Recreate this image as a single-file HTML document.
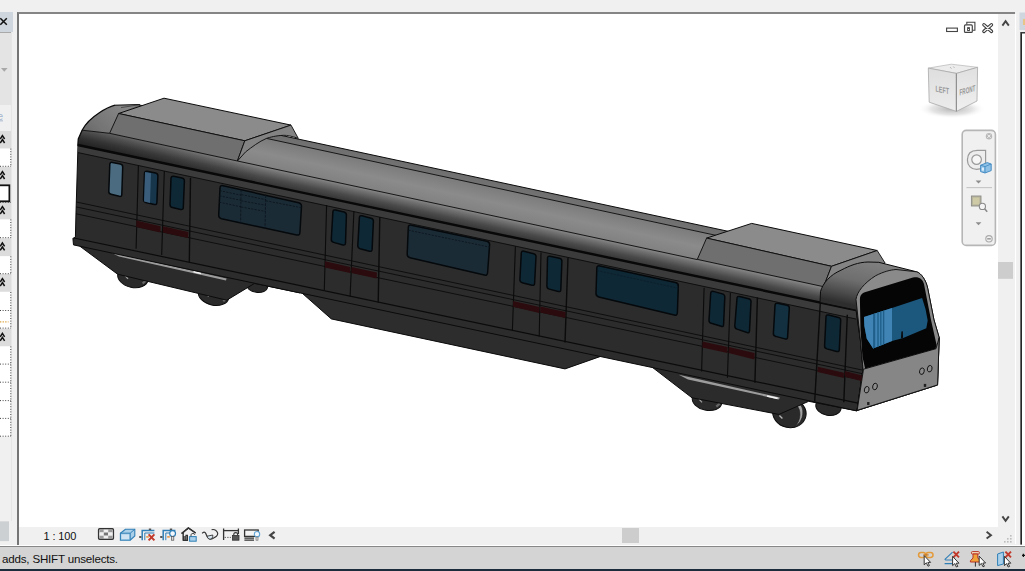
<!DOCTYPE html>
<html><head><meta charset="utf-8"><title>Revit 3D View</title>
<style>
html,body{margin:0;padding:0}
body{width:1025px;height:571px;overflow:hidden;background:#f0f0f0;position:relative;font-family:"Liberation Sans",sans-serif;color:#000}
.abs{position:absolute}
#vp{left:17px;top:12px;width:998px;height:533px;background:#f0f0f0;border-left:2px solid #757575;border-top:2px solid #858585;box-sizing:border-box}
#canvas{left:19px;top:14px;width:979px;height:513px;background:#fff}
#vscroll{left:998px;top:14px;width:16px;height:513px;background:#f0f0f0}
#hbar{left:19px;top:527px;width:996px;height:18px;background:#f0f0f0}
#status{left:0;top:545px;width:1025px;height:25px;background:#d4d4d4;box-sizing:border-box;border-top:1px solid #fff}
#status:before{content:'';position:absolute;left:0;top:0;width:1025px;height:1px;background:#878787}
#bottomline{left:0;top:569px;width:1025px;height:2px;background:#1d2c3c}
#scale{left:43.6px;top:529px;font-size:11px;line-height:14px;letter-spacing:-0.15px;color:#111;white-space:pre}
#stxt{left:2px;top:550.6px;font-size:11.6px;line-height:15px;letter-spacing:-0.2px;color:#111;white-space:pre}
#lp{left:0;top:12px;width:12px;height:533px;background:#f0f0f0}
.hdr{left:0;width:12px;background:#dadada}
.fld{left:0;width:10px;background:#fff;border:1px dotted #555;border-left:none;box-sizing:border-box}
</style></head><body>
<div class="abs" id="vp"></div>
<div class="abs" id="canvas"></div>
<div class="abs" id="vscroll"></div>
<div class="abs" id="hbar"></div>
<div class="abs" id="status"></div>
<div class="abs" id="bottomline"></div>
<div class="abs" id="scale">1 : 100</div>
<div class="abs" id="stxt">adds, SHIFT unselects.</div>
<div class="abs" id="lp"></div>
<!--CHROME_EXTRA-->
<svg class="abs" style="left:0;top:0" width="1025" height="571" viewBox="0 0 1025 571">
<g id="train" shape-rendering="geometricPrecision">
<defs>
<linearGradient id="roofg" gradientUnits="userSpaceOnUse" x1="300" y1="138.8" x2="288.7" y2="191.4">
<stop offset="0" stop-color="#6e6e6e"/><stop offset="0.115" stop-color="#727272"/>
<stop offset="0.125" stop-color="#7b7b7b"/><stop offset="0.4" stop-color="#8b8b8b"/><stop offset="0.67" stop-color="#808080"/>
<stop offset="0.70" stop-color="#747474"/><stop offset="0.84" stop-color="#4a4a4a"/><stop offset="1" stop-color="#2c2c2c"/>
</linearGradient>
<linearGradient id="capg" gradientUnits="userSpaceOnUse" x1="118" y1="104" x2="84" y2="140">
<stop offset="0" stop-color="#868686"/><stop offset="0.6" stop-color="#747474"/><stop offset="1" stop-color="#626262"/>
</linearGradient>
<linearGradient id="cabg" gradientUnits="userSpaceOnUse" x1="866" y1="262" x2="856.5" y2="306">
<stop offset="0" stop-color="#7e7e7e"/><stop offset="0.45" stop-color="#6e6e6e"/><stop offset="0.78" stop-color="#4a4a4a"/><stop offset="1" stop-color="#2e2e2e"/>
</linearGradient>
<linearGradient id="glassg" gradientUnits="userSpaceOnUse" x1="864" y1="0" x2="928" y2="0">
<stop offset="0" stop-color="#3b7fb0"/><stop offset="0.38" stop-color="#2f74a6"/><stop offset="0.42" stop-color="#1d5a82"/><stop offset="1" stop-color="#1b5880"/>
</linearGradient>
<linearGradient id="endshade" gradientUnits="userSpaceOnUse" x1="78" y1="0" x2="260" y2="0">
<stop offset="0" stop-color="#000" stop-opacity="0.34"/><stop offset="0.5" stop-color="#000" stop-opacity="0.2"/><stop offset="1" stop-color="#000" stop-opacity="0"/>
</linearGradient>
</defs>
<ellipse cx="133" cy="277" rx="15.5" ry="10.5" fill="#2a2a2a" stroke="#0c0c0c" stroke-width="1" transform="rotate(12 133 277)"/>
<path d="M125,275.5 L128,278.8" stroke="#a0a0a0" stroke-width="1.2"/>
<path d="M142.6,283.5 L146.3,280.1" stroke="#666" stroke-width="2.2"/>
<ellipse cx="213.7" cy="294.8" rx="15.5" ry="10.4" fill="#2a2a2a" stroke="#0c0c0c" stroke-width="1" transform="rotate(12 213.7 294.8)"/>
<path d="M205.7,293.3 L208.7,296.6" stroke="#a0a0a0" stroke-width="1.2"/>
<path d="M223.3,301.2 L227.0,297.9" stroke="#666" stroke-width="2.2"/>
<ellipse cx="257" cy="286" rx="10.6" ry="6.3" fill="#2a2a2a" stroke="#0c0c0c" stroke-width="1" transform="rotate(8 257 286)"/>
<ellipse cx="707" cy="400.5" rx="15" ry="9.8" fill="#2a2a2a" stroke="#0c0c0c" stroke-width="1" transform="rotate(12 707 400.5)"/>
<path d="M699,399.0 L702,402.3" stroke="#a0a0a0" stroke-width="1.2"/>
<path d="M716.3,406.6 L719.9,403.4" stroke="#666" stroke-width="2.2"/>
<ellipse cx="789.4" cy="413" rx="16.8" ry="14.6" fill="#2a2a2a" stroke="#0c0c0c" stroke-width="1" transform="rotate(12 789.4 413)"/>
<path d="M798.9,403.5 C804.9,407 804.4,421 795.4,426.2 C800.9,420 801.9,410 795.9,404.5 Z" fill="#a4a4a4" stroke="#1a1a1a" stroke-width="0.6"/>
<path d="M779.4,415.5 L782.4,418.5" stroke="#b5b5b5" stroke-width="1.3"/>
<ellipse cx="828.5" cy="406.5" rx="12.8" ry="8.8" fill="#2a2a2a" stroke="#0c0c0c" stroke-width="1" transform="rotate(10 828.5 406.5)"/>
<polygon points="80.0,246.3 117.6,274.2 226.8,300.2 254.5,283.4 300.0,292.9 300.0,284.9 80.0,240.3" fill="#2b2b2b" stroke="#0b0b0b" stroke-width="1"/>
<polygon points="109.5,251.8 119.0,256.6 226.0,280.6 226.6,278.6 121.0,254.4" fill="#9c9c9c"/>
<path d="M193.5,271.8 L201,273.5" stroke="#f2f2f2" stroke-width="1.6"/>
<polygon points="298.0,289.5 331.3,318.9 565.0,368.9 602.0,355.9 602.0,348.9 298.0,284.5" fill="#2d2d2d" stroke="#0b0b0b" stroke-width="1"/>
<polygon points="651.0,366.3 692.0,397.8 778.9,414.4 808.7,401.3 857.0,410.9 857.0,402.9 651.0,359.3" fill="#2b2b2b" stroke="#0b0b0b" stroke-width="1"/>
<polygon points="678.8,374.8 688.0,379.4 779.0,399.4 779.8,397.6 690.0,377.2" fill="#9c9c9c"/>
<path d="M767,396 L777.6,398.4" stroke="#f2f2f2" stroke-width="1.6"/>
<polygon points="78.0,145.0 856.0,310.1 860.4,340.0 863.0,369.0 857.0,410.9 73.5,244.9 72.9,238.3 75.4,237.3 76.0,212.0" fill="#2c2c2c" stroke="#0b0b0b" stroke-width="1"/>
<polygon points="78.0,145.0 856.0,310.1 856.5,319.0 78.0,152.6" fill="#3b3b3b"/>
<line x1="78" y1="152.6" x2="856" y2="319.0" stroke="#0b0b0b" stroke-width="0.9"/>
<line x1="76" y1="201.9" x2="862" y2="370.0" stroke="#0b0b0b" stroke-width="0.9"/>
<line x1="76" y1="206.9" x2="862" y2="373.6" stroke="#0b0b0b" stroke-width="0.9"/>
<line x1="76" y1="213.8" x2="862" y2="380.1" stroke="#0b0b0b" stroke-width="0.9"/>
<line x1="74" y1="238.0" x2="858" y2="403.1" stroke="#0b0b0b" stroke-width="1.2"/>
<polygon points="139.2,104.9 880.0,263.9 880.0,315.2 78.0,145.0 78.3,139.0 82.0,130.2 88.0,121.5 99.0,113.0 114.7,105.2" fill="url(#roofg)"/>
<polygon points="78.0,145.0 78.3,139.0 82.1,130.2 109.6,133.3 237.4,161.0 260.0,165.8 260.0,183.6" fill="url(#endshade)"/>
<path d="M82.1,130.2 C86,123 92,117.5 99,113 C105,109 110,106.5 115,105.2 L139.7,104.4 L118.6,113.5 L109.6,133.3 Z" fill="url(#capg)"/>
<path d="M115,105.2 L139.7,104.5" fill="none" stroke="#0b0b0b" stroke-width="1"/>
<path d="M121,107.6 L139.7,104.7" fill="none" stroke="#333" stroke-width="0.7"/>
<path d="M77.8,145.6 L78.3,139 L82.1,130.2 C86,123 92,117.5 99,113 C105,109 110,106.5 115,105.2" fill="none" stroke="#0b0b0b" stroke-width="1.3"/>
<line x1="139" y1="104.9" x2="860" y2="259.6" stroke="#0b0b0b" stroke-width="1"/>
<line x1="139" y1="110.9" x2="860" y2="266.4" stroke="#0b0b0b" stroke-width="0.9"/>
<line x1="237.4" y1="161" x2="697.3" y2="259.6" stroke="#0b0b0b" stroke-width="0.9"/>
<line x1="82.1" y1="130.2" x2="109.6" y2="133.3" stroke="#0b0b0b" stroke-width="0.9"/>
<line x1="77.8" y1="145.0" x2="856" y2="310.1" stroke="#080808" stroke-width="2.4"/>
<polygon points="118.6,113.5 164.0,98.2 291.0,125.1 244.8,140.8" fill="#8b8b8b" stroke="#0b0b0b" stroke-width="1"/>
<polygon points="118.6,113.5 244.8,140.8 237.4,161.0 109.6,133.3" fill="#6f6f6f" stroke="#0b0b0b" stroke-width="0.9"/>
<path d="M244.8,140.8 L291,125.1 L298.3,138.4 C292,136.2 287,135.2 283.6,135.3 C276,135.6 270,137.2 266.5,138.4 C259,141.5 252,147 245.6,151.9 L237.4,161 Z" fill="#838383" stroke="#0b0b0b" stroke-width="0.9"/>
<polygon points="706.6,238.1 751.7,223.4 877.2,250.5 831.5,266.3" fill="#8b8b8b" stroke="#0b0b0b" stroke-width="1"/>
<polygon points="706.6,238.1 831.5,266.3 823.6,286.7 697.3,259.4" fill="#6f6f6f" stroke="#0b0b0b" stroke-width="0.9"/>
<polygon points="831.5,266.3 877.2,250.5 885.1,263.1 823.6,286.7" fill="#838383" stroke="#0b0b0b" stroke-width="0.9"/>
<path d="M820.5,291.5 C823,283 830,275 841,270.2 C850,265.5 858,262.3 868,262 L878.8,262.3 L916.6,271.8 C921,273 926,280 927.7,288.3 L934,320 L939.2,337.6 L937.5,385 L857,410.5 L863,369 L860.4,340 L856,310.1 L820,302.5 Z" fill="url(#cabg)" stroke="#0b0b0b" stroke-width="1"/>
<path d="M856,299.4 C857,292 864,283 875.7,275.7 C884,271.5 890,270 896,269.5 L916.6,271.8 C921,273 926,280 927.7,288.3 L934,320 L939.2,337.6 L937.5,385 L857,410.5 L863,369 L860.4,340 Z" fill="#8a8a8a" stroke="#0b0b0b" stroke-width="0.9"/>
<polygon points="863.5,369.2 936.0,348.7 939.2,337.6 937.6,384.9 857.2,410.3" fill="#868686" stroke="#0b0b0b" stroke-width="0.9"/>
<path d="M859.9,299 C860,296 861,294 864,292.5 L913,277.6 C919,276.5 922.5,279 924,284 L931,320 L936.6,345 L935.5,348.7 L865.1,368.6 L862.5,357 L860.5,330 Z" fill="#050505"/>
<polygon points="864.0,317.1 892.0,308.0 922.1,297.9 925.5,309.0 927.7,320.6 926.3,328.3 903.2,338.1 894.8,340.2 892.0,340.9 873.1,348.6 866.8,338.8 864.4,326.0" fill="#1c587e"/>
<polygon points="864.0,317.1 892.0,308.0 892.0,340.9 873.1,348.6 866.8,338.8 864.4,326.0" fill="#3f84b4"/>
<polygon points="873.1,314.1 875.2,313.5 875.2,347.7 873.1,348.6" fill="#1f5f8a"/>
<polygon points="877.3,312.8 878.7,312.3 878.7,346.3 877.3,346.9" fill="#1f5f8a"/>
<polygon points="880.1,311.9 881.5,311.4 881.5,345.2 880.1,345.7" fill="#1f5f8a"/>
<polygon points="882.9,311.0 884.3,310.5 884.3,344.0 882.9,344.6" fill="#1f5f8a"/>
<polygon points="901.0,338.6 901.4,331.4 902.8,331.2 903.0,337.8" fill="#080808"/>
<ellipse cx="866.7" cy="389.7" rx="2.3" ry="3.3" fill="#8c8c8c" stroke="#111" stroke-width="0.9" transform="rotate(15 866.7 389.7)"/>
<ellipse cx="875" cy="386.5" rx="2.3" ry="3.3" fill="#8c8c8c" stroke="#111" stroke-width="0.9" transform="rotate(15 875 386.5)"/>
<ellipse cx="921.9" cy="371.2" rx="2.3" ry="3.3" fill="#8c8c8c" stroke="#111" stroke-width="0.9" transform="rotate(15 921.9 371.2)"/>
<ellipse cx="929.7" cy="368.7" rx="2.3" ry="3.3" fill="#8c8c8c" stroke="#111" stroke-width="0.9" transform="rotate(15 929.7 368.7)"/>
<rect x="867.0999999999999" y="402.0" width="2.4" height="3" fill="#222"/>
<rect x="923.8" y="383.9" width="2.4" height="3" fill="#222"/>
<path d="M109.8,164.4 Q110.0,162.0 112.4,162.4 L120.3,164.1 Q122.8,164.6 122.7,167.0 L121.8,194.4 Q121.8,196.8 119.3,196.3 L111.1,194.2 Q108.6,193.6 108.8,191.2 Z" fill="#4a6b80" stroke="#05090c" stroke-width="1.5"/>
<path d="M144.5,173.3 Q144.7,170.9 147.1,171.3 L155.6,173.1 Q158.0,173.6 157.9,176.0 L156.9,202.6 Q156.8,205.0 154.3,204.5 L145.8,202.4 Q143.4,201.8 143.5,199.4 Z" fill="#17364b" stroke="#05090c" stroke-width="1.5"/>
<polygon points="145.0,172.0 151.0,173.2 150.0,203.0 144.0,201.5" fill="#3f6482" opacity="0.85"/>
<path d="M171.0,178.3 Q171.2,175.9 173.6,176.3 L182.0,177.9 Q184.4,178.4 184.4,180.8 L183.3,207.6 Q183.2,210.0 180.8,209.5 L172.3,207.5 Q169.9,206.9 170.0,204.5 Z" fill="#0f2836" stroke="#05090c" stroke-width="1.5"/>
<path d="M220.0,188.0 Q220.2,185.1 223.1,185.7 L298.7,202.7 Q301.6,203.4 301.5,206.3 L299.9,232.7 Q299.8,235.6 296.8,235.0 L221.5,218.7 Q218.6,218.0 218.7,215.1 Z" fill="#1b2b36" stroke="#05090c" stroke-width="1.5"/>
<path d="M332.9,211.9 Q333.1,209.5 335.5,210.0 L344.0,212.1 Q346.4,212.7 346.4,215.1 L345.5,243.1 Q345.4,245.5 343.0,244.9 L333.6,242.4 Q331.2,241.8 331.3,239.3 Z" fill="#0f2836" stroke="#05090c" stroke-width="1.5"/>
<path d="M359.4,217.6 Q359.6,215.2 362.0,215.8 L371.1,218.3 Q373.6,219.0 373.4,221.4 L372.1,249.4 Q371.9,251.8 369.5,251.2 L360.1,248.7 Q357.7,248.0 357.8,245.6 Z" fill="#0f2836" stroke="#05090c" stroke-width="1.5"/>
<path d="M408.3,227.5 Q408.4,224.6 411.4,225.2 L486.9,241.2 Q489.8,241.9 489.6,244.8 L487.6,272.8 Q487.3,275.8 484.4,275.1 L410.0,257.7 Q407.1,257.1 407.2,254.1 Z" fill="#1b2b36" stroke="#05090c" stroke-width="1.5"/>
<path d="M521.3,253.0 Q521.4,250.6 523.9,251.2 L533.7,253.7 Q536.2,254.4 536.0,256.8 L534.6,283.4 Q534.5,285.8 532.0,285.2 L522.2,282.7 Q519.8,282.1 519.9,279.6 Z" fill="#0f2836" stroke="#05090c" stroke-width="1.5"/>
<path d="M547.5,258.2 Q547.5,255.8 550.0,256.3 L559.5,258.2 Q562.0,258.8 561.9,261.2 L560.8,289.7 Q560.8,292.1 558.3,291.5 L549.3,289.1 Q546.8,288.4 546.9,286.0 Z" fill="#0f2836" stroke="#05090c" stroke-width="1.5"/>
<path d="M596.8,268.2 Q596.9,265.2 599.9,265.9 L675.5,282.6 Q678.5,283.2 678.3,286.2 L677.4,312.8 Q677.2,315.8 674.3,315.1 L598.8,296.9 Q595.8,296.2 596.0,293.3 Z" fill="#0e2835" stroke="#05090c" stroke-width="1.5"/>
<path d="M710.7,293.2 Q710.8,290.8 713.3,291.4 L722.4,293.9 Q724.9,294.6 724.8,297.0 L723.6,324.6 Q723.6,327.1 721.2,326.3 L711.2,323.3 Q708.8,322.6 709.0,320.1 Z" fill="#0f2836" stroke="#05090c" stroke-width="1.5"/>
<path d="M737.0,298.3 Q737.1,295.9 739.6,296.5 L748.7,298.7 Q751.2,299.4 751.0,301.8 L749.5,330.9 Q749.4,333.3 747.0,332.5 L737.0,329.1 Q734.6,328.2 734.8,325.8 Z" fill="#0f2836" stroke="#05090c" stroke-width="1.5"/>
<path d="M775.0,305.3 Q775.1,302.9 777.6,303.3 L787.0,305.3 Q789.5,305.8 789.3,308.2 L787.6,337.1 Q787.5,339.6 785.0,338.9 L775.7,336.4 Q773.2,335.8 773.4,333.3 Z" fill="#12303f" stroke="#05090c" stroke-width="1.5"/>
<path d="M826.0,316.8 Q826.1,314.4 828.6,315.0 L838.4,317.4 Q840.9,318.1 840.7,320.5 L839.3,349.6 Q839.2,352.1 836.7,351.4 L826.9,348.9 Q824.4,348.2 824.6,345.8 Z" fill="#0f2836" stroke="#05090c" stroke-width="1.5"/>
<line x1="241.1" y1="189.4" x2="240.6" y2="223.4" stroke="#0a131a" stroke-width="0.8" stroke-dasharray="3 1"/>
<line x1="265.7" y1="194.8" x2="265" y2="228.6" stroke="#0a131a" stroke-width="0.8" stroke-dasharray="3 1"/>
<line x1="219.6" y1="190.6" x2="241" y2="195.2" stroke="#0a131a" stroke-width="0.8" stroke-dasharray="2.2 1.2"/>
<line x1="219.4" y1="195.8" x2="241" y2="200.3" stroke="#0a131a" stroke-width="0.8" stroke-dasharray="2.2 1.2"/>
<line x1="219.2" y1="202.2" x2="241" y2="206.8" stroke="#0a131a" stroke-width="0.8" stroke-dasharray="2.2 1.2"/>
<line x1="241.4" y1="194.6" x2="265.5" y2="199.6" stroke="#0a131a" stroke-width="0.8" stroke-dasharray="2.2 1.2"/>
<line x1="241.3" y1="200.8" x2="265.4" y2="205.2" stroke="#0a131a" stroke-width="0.8" stroke-dasharray="2.2 1.2"/>
<line x1="241.2" y1="207" x2="265.3" y2="211.4" stroke="#0a131a" stroke-width="0.8" stroke-dasharray="2.2 1.2"/>
<line x1="266" y1="200.8" x2="302" y2="207.8" stroke="#0a131a" stroke-width="0.8" stroke-dasharray="2.2 1.2"/>
<line x1="408.4" y1="230.2" x2="490" y2="247.2" stroke="#0a131a" stroke-width="0.8" stroke-dasharray="2.2 1.2"/>
<line x1="597" y1="270.6" x2="679" y2="288.4" stroke="#0b1a24" stroke-width="0.6" stroke-dasharray="2.2 1.2"/>
<line x1="138.4" y1="165.2" x2="136.1" y2="248.8" stroke="#0b0b0b" stroke-width="1.1"/>
<line x1="164.3" y1="170.9" x2="161.7" y2="255.1" stroke="#0b0b0b" stroke-width="1.1"/>
<line x1="190.5" y1="177.7" x2="189.3" y2="262.6" stroke="#0b0b0b" stroke-width="1.4"/>
<line x1="326.6" y1="205.1" x2="324.3" y2="290.1" stroke="#0b0b0b" stroke-width="1.1"/>
<line x1="353.9" y1="211.4" x2="350.1" y2="296.4" stroke="#0b0b0b" stroke-width="1.1"/>
<line x1="379.8" y1="217.1" x2="378.2" y2="302.6" stroke="#0b0b0b" stroke-width="1.4"/>
<line x1="515.4" y1="246.3" x2="512.4" y2="330.2" stroke="#0b0b0b" stroke-width="1.1"/>
<line x1="541" y1="252.5" x2="539.2" y2="336.5" stroke="#0b0b0b" stroke-width="1.1"/>
<line x1="568" y1="257.7" x2="565" y2="342.6" stroke="#0b0b0b" stroke-width="1.4"/>
<line x1="704.1" y1="287.7" x2="701.6" y2="371.4" stroke="#0b0b0b" stroke-width="1.1"/>
<line x1="730.4" y1="292.7" x2="727.4" y2="377.7" stroke="#0b0b0b" stroke-width="1.1"/>
<line x1="757.4" y1="297.5" x2="754.9" y2="382.7" stroke="#0b0b0b" stroke-width="1.4"/>
<line x1="820.3" y1="303" x2="814.7" y2="401.5" stroke="#0b0b0b" stroke-width="1.4"/>
<line x1="847.3" y1="314.7" x2="843.8" y2="402.3" stroke="#0b0b0b" stroke-width="1.4"/>
<polygon points="136.4,220.5 160.6,226.3 160.4,232.6 136.2,227.1" fill="#2c0b0e"/>
<polygon points="163.0,226.3 188.4,232.1 188.2,238.1 162.8,232.6" fill="#2c0b0e"/>
<polygon points="325.0,261.3 350.3,267.1 350.1,272.9 324.8,267.6" fill="#2c0b0e"/>
<polygon points="351.6,267.1 376.9,272.6 376.7,278.4 351.4,272.9" fill="#2c0b0e"/>
<polygon points="513.1,300.9 539.4,307.0 539.2,313.0 512.9,306.7" fill="#2c0b0e"/>
<polygon points="540.4,306.6 565.6,312.1 565.4,318.1 540.2,312.6" fill="#2c0b0e"/>
<polygon points="702.5,341.4 727.6,347.1 727.4,353.1 702.3,347.6" fill="#2c0b0e"/>
<polygon points="728.8,347.1 754.6,353.1 754.4,359.4 728.6,353.1" fill="#2c0b0e"/>
<polygon points="817.8,366.8 843.9,372.8 843.8,378.0 817.6,372.0" fill="#2c0b0e"/>
<polygon points="844.9,371.0 862.2,375.5 861.4,380.9 844.8,376.8" fill="#2c0b0e"/>
</g>
<rect x="0" y="12" width="13" height="20" fill="#cfd6de"/>
<path d="M0.3,18.3 L6.8,24.8 M6.8,18.3 L0.3,24.8" stroke="#111" stroke-width="1.5" fill="none"/>
<rect x="0" y="32" width="11" height="1.2" fill="#a9a9a9"/>
<rect x="0" y="33" width="11" height="72" fill="#e4e4e4"/>
<rect x="11" y="32" width="1" height="489" fill="#e6e6e6"/>
<path d="M1,68 L7.6,68 L4.3,71.8 Z" fill="#a8a8a8"/>
<text x="-2.6" y="119.6" font-family="Liberation Sans, sans-serif" font-size="10" fill="#a3b4cc">e</text>
<rect x="0" y="120.4" width="3" height="0.9" fill="#a3b4cc"/>
<rect x="0" y="131" width="11" height="17.6" fill="#dcdcdc"/>
<path d="M0.2,139.0 L2.4,135.6 L4.6,139.0 M0.2,143.0 L2.4,139.6 L4.6,143.0" stroke="#111" stroke-width="1.5" fill="none"/>
<rect x="0" y="167" width="11" height="17.6" fill="#dcdcdc"/>
<path d="M0.2,175.0 L2.4,171.6 L4.6,175.0 M0.2,179.0 L2.4,175.6 L4.6,179.0" stroke="#111" stroke-width="1.5" fill="none"/>
<rect x="0" y="202" width="11" height="17.6" fill="#dcdcdc"/>
<path d="M0.2,210.0 L2.4,206.6 L4.6,210.0 M0.2,214.0 L2.4,210.6 L4.6,214.0" stroke="#111" stroke-width="1.5" fill="none"/>
<rect x="0" y="238.4" width="11" height="17.6" fill="#dcdcdc"/>
<path d="M0.2,246.4 L2.4,243.0 L4.6,246.4 M0.2,250.4 L2.4,247.0 L4.6,250.4" stroke="#111" stroke-width="1.5" fill="none"/>
<rect x="0" y="274" width="11" height="17.6" fill="#dcdcdc"/>
<path d="M0.2,282.0 L2.4,278.6 L4.6,282.0 M0.2,286.0 L2.4,282.6 L4.6,286.0" stroke="#111" stroke-width="1.5" fill="none"/>
<rect x="0" y="328.8" width="11" height="17.6" fill="#dcdcdc"/>
<path d="M0.2,336.8 L2.4,333.40000000000003 L4.6,336.8 M0.2,340.8 L2.4,337.40000000000003 L4.6,340.8" stroke="#111" stroke-width="1.5" fill="none"/>
<rect x="0" y="148.6" width="10.6" height="18.0" fill="#fff"/>
<path d="M10.8,148.6 V166.6" stroke="#444" stroke-width="1" stroke-dasharray="1 1.6" fill="none"/>
<path d="M0,166.29999999999998 H11" stroke="#444" stroke-width="1" stroke-dasharray="1 1.6" fill="none"/>
<rect x="0" y="219.4" width="10.6" height="18.599999999999994" fill="#fff"/>
<path d="M10.8,219.4 V238" stroke="#444" stroke-width="1" stroke-dasharray="1 1.6" fill="none"/>
<path d="M0,237.7 H11" stroke="#444" stroke-width="1" stroke-dasharray="1 1.6" fill="none"/>
<rect x="0" y="256.3" width="10.6" height="17.69999999999999" fill="#fff"/>
<path d="M10.8,256.3 V274" stroke="#444" stroke-width="1" stroke-dasharray="1 1.6" fill="none"/>
<path d="M0,273.7 H11" stroke="#444" stroke-width="1" stroke-dasharray="1 1.6" fill="none"/>
<rect x="0" y="292" width="10.6" height="36.39999999999998" fill="#fff"/>
<path d="M10.8,292 V328.4" stroke="#444" stroke-width="1" stroke-dasharray="1 1.6" fill="none"/>
<path d="M0,328.09999999999997 H11" stroke="#444" stroke-width="1" stroke-dasharray="1 1.6" fill="none"/>
<rect x="0" y="346.4" width="10.6" height="90.10000000000002" fill="#fff"/>
<path d="M10.8,346.4 V436.5" stroke="#444" stroke-width="1" stroke-dasharray="1 1.6" fill="none"/>
<path d="M0,436.2 H11" stroke="#444" stroke-width="1" stroke-dasharray="1 1.6" fill="none"/>
<path d="M0,310.5 H11" stroke="#444" stroke-width="1" stroke-dasharray="1 1.6" fill="none"/>
<path d="M0,364.1 H11" stroke="#444" stroke-width="1" stroke-dasharray="1 1.6" fill="none"/>
<path d="M0,382.2 H11" stroke="#444" stroke-width="1" stroke-dasharray="1 1.6" fill="none"/>
<path d="M0,400.6 H11" stroke="#444" stroke-width="1" stroke-dasharray="1 1.6" fill="none"/>
<path d="M0,418.4 H11" stroke="#444" stroke-width="1" stroke-dasharray="1 1.6" fill="none"/>
<path d="M0,321.8 H8.5" stroke="#d9a441" stroke-width="1.2" stroke-dasharray="1.3 1.3" fill="none"/>
<rect x="-2" y="185.3" width="11.4" height="16" fill="#fff" stroke="#111" stroke-width="1.8"/>
<path d="M0,202.4 H11" stroke="#444" stroke-width="1" stroke-dasharray="1 1.6" fill="none"/>
<rect x="0" y="521.3" width="9" height="19.8" fill="#cdd0d2"/>
<rect x="946.6" y="28.1" width="10.8" height="3.4" fill="#fff" stroke="#444" stroke-width="1.1"/>
<path d="M966.8,24.6 V22.3 H974.9 V30.3 H972.6" fill="none" stroke="#444" stroke-width="1.1"/>
<rect x="964.5" y="24.9" width="7.8" height="7.5" rx="1" fill="#fff" stroke="#444" stroke-width="1.2"/>
<rect x="967.6" y="27.6" width="1.9" height="3" fill="#fff" stroke="#444" stroke-width="0.9"/>
<path d="M983.9,24.8 L991.5,31.4 M991.5,24.8 L983.9,31.4" stroke="#3a3a3a" stroke-width="3.4" stroke-linecap="round" fill="none"/>
<path d="M983.9,24.8 L991.5,31.4 M991.5,24.8 L983.9,31.4" stroke="#f4f4f4" stroke-width="1.3" stroke-linecap="round" fill="none"/>
<path d="M1002.4,25.6 L1005.6,21.2 L1008.8,25.6" stroke="#444" stroke-width="1.9" fill="none"/>
<path d="M1002.4,516.4 L1005.6,520.8 L1008.8,516.4" stroke="#444" stroke-width="1.9" fill="none"/>
<path d="M274.6,531.8 L270.2,535.2 L274.6,538.6" stroke="#444" stroke-width="2.2" fill="none"/>
<path d="M986.6,531.8 L991,535.2 L986.6,538.6" stroke="#444" stroke-width="1.9" fill="none"/>
<rect x="622" y="528" width="17" height="15" fill="#cdcdcd"/>
<rect x="998" y="262" width="15" height="16.8" fill="#cdcdcd"/>
<rect x="1010" y="541" width="1.6" height="1.6" fill="#bdbdbd"/>
<rect x="1010" y="538" width="1.6" height="1.6" fill="#bdbdbd"/>
<rect x="1007" y="541" width="1.6" height="1.6" fill="#bdbdbd"/>
<rect x="1010" y="535" width="1.6" height="1.6" fill="#bdbdbd"/>
<rect x="1007" y="538" width="1.6" height="1.6" fill="#bdbdbd"/>
<rect x="1004" y="541" width="1.6" height="1.6" fill="#bdbdbd"/>
<rect x="1019.5" y="12.5" width="6" height="17.5" fill="#cfd6de"/>
<rect x="1023" y="19" width="2" height="6" fill="#e8c486"/>
<rect x="1022" y="33.5" width="4" height="511" fill="#fff"/>
<rect x="1020" y="32" width="1" height="512.6" fill="#6a6a6a"/><rect x="1021" y="32" width="1" height="512.6" fill="#262626"/><rect x="1021" y="32" width="4" height="1.5" fill="#3a3a3a"/>
<rect x="1015" y="14" width="1.1" height="530" fill="#fff"/>
<defs><radialGradient id="shadow"><stop offset="0" stop-color="#9a9a9a" stop-opacity="0.75"/><stop offset="0.6" stop-color="#bdbdbd" stop-opacity="0.4"/><stop offset="1" stop-color="#ffffff" stop-opacity="0"/></radialGradient><linearGradient id="cubeL" x1="0" y1="0" x2="0" y2="1"><stop offset="0" stop-color="#dedede"/><stop offset="1" stop-color="#ececec"/></linearGradient><linearGradient id="cubeR" x1="0" y1="0" x2="0" y2="1"><stop offset="0" stop-color="#e0e0e0"/><stop offset="1" stop-color="#f0f0f0"/></linearGradient></defs>
<ellipse cx="952" cy="109" rx="34" ry="9.5" fill="url(#shadow)"/>
<polygon points="928.3,68.1 951.3,64.2 977.6,67.3 956.4,73.4" fill="#ececec" stroke="#b4b4b4" stroke-width="0.7"/>
<polygon points="928.3,68.1 956.4,73.4 956.4,111.4 929.2,102.2" fill="url(#cubeL)" stroke="#a8a8a8" stroke-width="0.8"/>
<polygon points="956.4,73.4 977.6,67.3 977,101 956.4,111.4" fill="url(#cubeR)" stroke="#a8a8a8" stroke-width="0.8"/>
<path d="M956.4,73.4 V111.4" stroke="#8c8c8c" stroke-width="1"/>
<text transform="matrix(1,0.19,0,1,935.6,91.6)" font-family="Liberation Sans, sans-serif" font-size="8.6" font-weight="bold" fill="#979797" textLength="13.4" lengthAdjust="spacingAndGlyphs">LEFT</text>
<text transform="matrix(1,-0.3,0,1,959.6,95.6)" font-family="Liberation Sans, sans-serif" font-size="8.6" font-weight="bold" fill="#979797" textLength="15.6" lengthAdjust="spacingAndGlyphs">FRONT</text>
<path d="M950.2,67.2 L951.4,68.6 M953.4,66.6 L954.4,67.8" stroke="#a8a8a8" stroke-width="0.9"/>
<rect x="962.2" y="130.4" width="33.2" height="115" rx="4" fill="#f0f0f0" stroke="#b6b6b6" stroke-width="1.6"/>
<circle cx="989" cy="136.2" r="3.2" fill="#b9b9b9"/><path d="M987.4,134.6 L990.6,137.8 M990.6,134.6 L987.4,137.8" stroke="#f4f4f4" stroke-width="1"/>
<path d="M967.4,160 C967.4,153 972,150.4 977.4,150.4 H985.6 V162 C985.6,167 981,169.4 976.6,169.4 C971.4,169.4 967.4,165.6 967.4,160 Z" fill="#ededed" stroke="#9a9a9a" stroke-width="1.2"/>
<circle cx="976.6" cy="159.6" r="4.8" fill="#f6f6f6" stroke="#9a9a9a" stroke-width="1.2"/>
<polygon points="980.6,165.2 987.2,162.6 991.2,164 991.2,170.6 985,173 980.6,171.6" fill="#8fc1e6" stroke="#3b86bf" stroke-width="0.9"/>
<path d="M980.6,165.2 L985,166.6 L991.2,164 M985,166.6 V173" stroke="#3b86bf" stroke-width="0.8" fill="none"/>
<rect x="981.8" y="167.6" width="2.2" height="3" fill="#dcecf8"/>
<path d="M975.6,180.4 H981.4 L978.5,183.4 Z" fill="#8c8c8c"/>
<path d="M966.4,187.6 H992" stroke="#c4c4c4" stroke-width="1.1"/>
<rect x="971.4" y="196" width="9.6" height="10" fill="#b7b49e" stroke="#8c8c86" stroke-width="0.9"/>
<rect x="973" y="197.6" width="6.4" height="6.8" fill="#cfcaa6"/>
<circle cx="982.4" cy="206.4" r="3.1" fill="#f4f4f4" stroke="#8a8a8a" stroke-width="1.1"/><path d="M984.6,208.8 L987.2,211.8" stroke="#8a8a8a" stroke-width="1.6"/>
<path d="M975.6,222.2 H981.4 L978.5,225.2 Z" fill="#8c8c8c"/>
<circle cx="989" cy="238.8" r="3.2" fill="#f0f0f0" stroke="#a9a9a9" stroke-width="1.1"/><path d="M987.2,238.8 H990.8" stroke="#a0a0a0" stroke-width="1.6"/>
<rect x="98.6" y="528.7" width="14.8" height="10.6" rx="1" fill="#fff" stroke="#333" stroke-width="1.4"/>
<rect x="99.6" y="529.7" width="4.2" height="2.8" fill="#9a9a9a"/>
<rect x="103.8" y="529.7" width="4.4" height="2.8" fill="#f0f0f0"/>
<rect x="108.2" y="529.7" width="4.2" height="2.8" fill="#9a9a9a"/>
<rect x="99.6" y="532.5" width="4.2" height="3.2" fill="#f0f0f0"/>
<rect x="103.8" y="532.5" width="4.4" height="3.2" fill="#777"/>
<rect x="108.2" y="532.5" width="4.2" height="3.2" fill="#f0f0f0"/>
<rect x="99.6" y="535.7" width="4.2" height="2.6" fill="#9a9a9a"/>
<rect x="103.8" y="535.7" width="4.4" height="2.6" fill="#f0f0f0"/>
<rect x="108.2" y="535.7" width="4.2" height="2.6" fill="#9a9a9a"/>
<polygon points="120.4,533.2 125.4,529.2 134.8,529.2 134.8,536 130.2,540.2 120.4,540.2" fill="#a9cfe9" stroke="#2f7fb6" stroke-width="1.1"/>
<path d="M120.4,533.2 H130.2 L134.8,529.2 M130.2,533.2 V540.2" stroke="#2f7fb6" stroke-width="1" fill="none"/>
<rect x="121.6" y="534.6" width="7.4" height="4.4" fill="#cfe3f2"/>
<path d="M142.2,540.2 V530.6 H154.39999999999998" stroke="#2f7fb6" stroke-width="1.5" fill="none"/>
<path d="M144.79999999999998,540.2 V533 H154.39999999999998" stroke="#2f7fb6" stroke-width="1" fill="none"/>
<rect x="139.2" y="536.2" width="2.2" height="1.6" fill="#333"/><rect x="148.79999999999998" y="528.6" width="2.4" height="1.2" fill="#333"/>
<rect x="146.2" y="536.2" width="2.6" height="1.4" fill="#e68a2e"/>
<path d="M148.6,534.4 L154.4,540.4 M154.4,534.4 L148.6,540.4" stroke="#c0392b" stroke-width="2" fill="none"/>
<path d="M163.2,540.2 V530.6 H175.39999999999998" stroke="#2f7fb6" stroke-width="1.5" fill="none"/>
<path d="M165.79999999999998,540.2 V533 H175.39999999999998" stroke="#2f7fb6" stroke-width="1" fill="none"/>
<rect x="160.2" y="536.2" width="2.2" height="1.6" fill="#333"/><rect x="169.79999999999998" y="528.6" width="2.4" height="1.2" fill="#333"/>
<rect x="167.2" y="536.2" width="2.6" height="1.4" fill="#e68a2e"/>
<circle cx="172.6" cy="533.6" r="2.9" fill="#f4f8fc" stroke="#2f7fb6" stroke-width="1.2"/><rect x="171.4" y="536.6" width="2.4" height="3.6" fill="#d8d8d8" stroke="#555" stroke-width="0.7"/>
<path d="M181.6,533.6 L188.4,528 L195.6,533 M183.4,532.6 V540.4 H187.4 V535 H185 V540.4 M188.4,528 L186.8,529.8" stroke="#333" stroke-width="1.3" fill="#f4f4f4"/>
<path d="M183.4,533.4 L188.4,529.2 L193.6,533 V536 H183.4 Z" fill="#f2f2f2" stroke="none"/>
<path d="M181.6,533.6 L188.4,528 L195.6,533" stroke="#333" stroke-width="1.4" fill="none"/><path d="M183.2,533 V540.6 M186,540.6 V535.4 H188 " stroke="#333" stroke-width="1.2" fill="none"/>
<rect x="189.6" y="536.6" width="6.6" height="4.6" fill="#a9cfe9" stroke="#2f7fb6" stroke-width="1"/><path d="M191,536.4 V534.8 C191,533 194.8,533 194.8,534.8" stroke="#444" stroke-width="1" fill="none"/>
<path d="M202.2,533.4 C203.4,531.6 205,531.8 205.8,533.6 C206.8,536 207.6,538.6 210.4,539.2 C212.4,539.4 214.2,537.6 216.4,536.2 C218.4,534.6 218,532.2 216,530.6 C214.6,529.6 213,529.2 211.6,529.8" stroke="#333" stroke-width="1.2" fill="none"/>
<path d="M207.2,536.2 L212.8,535 C213,537.6 211.6,539.2 210,539.2 C208.4,539 207.4,537.8 207.2,536.2 Z" fill="#d7e6f1" stroke="#333" stroke-width="0.9"/>
<path d="M223.6,528.4 V540 M238.4,528.4 V534" stroke="#333" stroke-width="1.3"/><path d="M223.6,530.6 H238.4" stroke="#333" stroke-width="1.3"/>
<path d="M224.6,537.4 H231" stroke="#666" stroke-width="1" stroke-dasharray="1.4 1.2"/>
<rect x="232.4" y="535.4" width="6.6" height="4.8" fill="#555" stroke="#333" stroke-width="0.8"/><path d="M233.8,535.2 V534 C233.8,532.2 237.6,532.2 237.6,534 V535.2" stroke="#333" stroke-width="1.1" fill="none"/>
<rect x="244.6" y="530" width="13.6" height="6.4" fill="#f4f4f4" stroke="#333" stroke-width="1.3"/><path d="M244.4,538.2 H254 M244.4,540.2 H254" stroke="#333" stroke-width="1.2"/>
<circle cx="257" cy="534.2" r="2.7" fill="#f4f8fc" stroke="#5fa3d6" stroke-width="1.1"/><rect x="256" y="537" width="2" height="3.2" fill="#ddd" stroke="#666" stroke-width="0.6"/>
<rect x="918.6" y="552.4" width="7" height="5" rx="2.4" fill="none" stroke="#e39a3b" stroke-width="1.5"/>
<rect x="926" y="552.4" width="7" height="5" rx="2.4" fill="none" stroke="#e39a3b" stroke-width="1.5"/>
<path d="M923.4,554.9 H928.6" stroke="#c97a20" stroke-width="1.3"/>
<path transform="translate(924.2,555.6) scale(1.0)" d="M0,0 L0,9.2 L2.2,7.2 L3.8,10.6 L5.2,10 L3.6,6.8 L6.4,6.8 Z" fill="#fff" stroke="#222" stroke-width="0.9"/>
<path d="M944.6,559.6 L952.6,552.2 M945.2,560 H952 M944.6,563.6 H953" stroke="#2f7fb6" stroke-width="1.1" fill="none"/>
<path d="M953.4,551.6 L959,557.4 M959,551.6 L953.4,557.4" stroke="#c0392b" stroke-width="1.9"/>
<path transform="translate(952.6,556.4) scale(1.0)" d="M0,0 L0,9.2 L2.2,7.2 L3.8,10.6 L5.2,10 L3.6,6.8 L6.4,6.8 Z" fill="#fff" stroke="#222" stroke-width="0.9"/>
<rect x="971.4" y="551.6" width="8" height="2.4" rx="1" fill="#f7e3c0" stroke="#b83227" stroke-width="1"/>
<path d="M973,554 H977.8 V558 L980.4,560.8 V562 H970.4 V560.8 L973,558 Z" fill="#f0a23a" stroke="#b83227" stroke-width="1"/>
<path d="M975.4,562 V566.6" stroke="#333" stroke-width="1"/>
<path transform="translate(979.2,556.2) scale(1.0)" d="M0,0 L0,9.2 L2.2,7.2 L3.8,10.6 L5.2,10 L3.6,6.8 L6.4,6.8 Z" fill="#fff" stroke="#222" stroke-width="0.9"/>
<polygon points="997.6,554 1003.4,552 1003.4,564 997.6,565.6" fill="#a9cfe9" stroke="#2f7fb6" stroke-width="1"/>
<path d="M1005.4,551.6 L1011,557.4 M1011,551.6 L1005.4,557.4" stroke="#c0392b" stroke-width="1.9"/>
<path transform="translate(1004.4,556.4) scale(1.0)" d="M0,0 L0,9.2 L2.2,7.2 L3.8,10.6 L5.2,10 L3.6,6.8 L6.4,6.8 Z" fill="#fff" stroke="#222" stroke-width="0.9"/>
<path d="M1022,555.4 H1025 M1023.4,553.8 V557" stroke="#111" stroke-width="1.2"/>
</svg>
</body></html>
